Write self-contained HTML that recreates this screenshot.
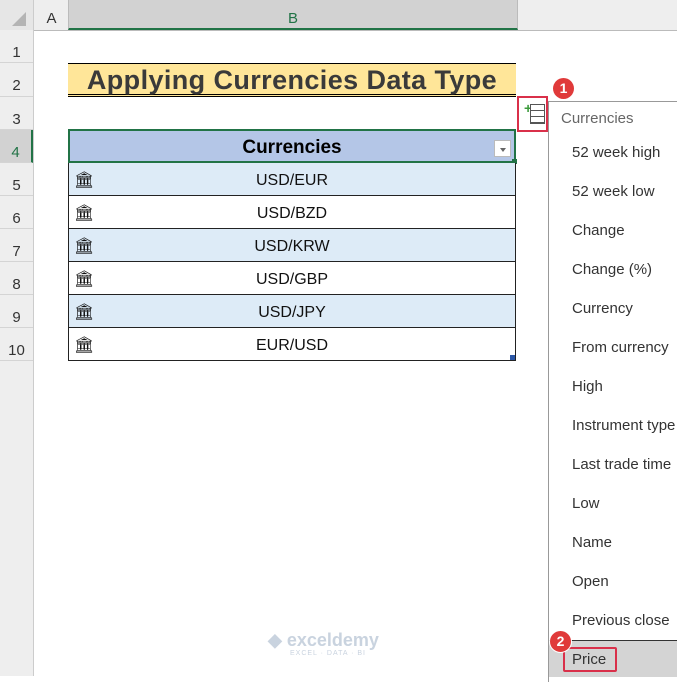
<!DOCTYPE html><html><head><style>
body{margin:0;width:677px;height:676px;overflow:hidden;background:#fff;font-family:"Liberation Sans",sans-serif;position:relative}
.a{position:absolute}
.rh{position:absolute;left:0;width:33px;text-align:center;font-size:15px;color:#333;border-bottom:1px solid #d4d4d4;background:#eeeeee;box-sizing:border-box}
.cell{position:absolute;left:68px;width:448px;height:33px;border-bottom:1px solid #222;box-sizing:border-box;font-size:16px;text-align:center;line-height:35px;color:#111}
.cell span{position:absolute;left:5px;top:0;font-size:16px}
.mi{position:absolute;left:572px;font-size:15px;color:#333}
</style></head><body>
<div class="a" style="left:0;top:0;width:677px;height:30px;background:#eeeeee;border-bottom:1px solid #bbb"></div>
<div class="a" style="left:0;top:0;width:33px;height:30px;background:#e6e6e6"></div>
<div class="a" style="left:12px;top:12px;width:0;height:0;border-left:14px solid transparent;border-bottom:14px solid #b4b4b4"></div>
<div class="a" style="left:33px;top:0;width:35px;height:30px;border-left:1px solid #ccc;text-align:center;line-height:38px;font-size:15px;color:#333">A</div>
<div class="a" style="left:68px;top:0;width:448px;height:28px;background:#d2d2d2;border-bottom:2px solid #217346;border-left:1px solid #bbb;border-right:1px solid #bbb;text-align:center;line-height:38px;font-size:15px;color:#217346">B</div>
<div class="a" style="left:0;top:30px;width:33px;height:646px;background:#eeeeee;border-right:1px solid #ccc"></div>
<div class="rh" style="top:30px;height:33px;line-height:46px">1</div>
<div class="rh" style="top:63px;height:34px;line-height:46px">2</div>
<div class="rh" style="top:97px;height:33px;line-height:46px">3</div>
<div class="rh" style="top:130px;height:33px;line-height:46px;background:#d2d2d2;color:#217346;border-right:2px solid #217346">4</div>
<div class="rh" style="top:163px;height:33px;line-height:46px">5</div>
<div class="rh" style="top:196px;height:33px;line-height:46px">6</div>
<div class="rh" style="top:229px;height:33px;line-height:46px">7</div>
<div class="rh" style="top:262px;height:33px;line-height:46px">8</div>
<div class="rh" style="top:295px;height:33px;line-height:46px">9</div>
<div class="rh" style="top:328px;height:33px;line-height:46px">10</div>
<div class="a" style="left:68px;top:63px;width:448px;height:30px;background:#ffe699;border-top:1px solid #000;border-bottom:3px double #000;text-align:center;font-weight:bold;font-size:27px;line-height:33px;color:#3a3a3a;letter-spacing:0.4px">Applying Currencies Data Type</div>
<div class="a" style="left:68px;top:129px;width:444px;height:30px;background:#b4c6e7;border:2px solid #217346;text-align:center;font-weight:bold;font-size:19px;line-height:33px;color:#000">Currencies</div>
<div class="a" style="left:494px;top:140px;width:17px;height:17px;background:#fff;border:1px solid #bbb;box-sizing:border-box"></div>
<div class="a" style="left:500px;top:148px;width:0;height:0;border-left:3px solid transparent;border-right:3px solid transparent;border-top:4px solid #666"></div>
<div class="a" style="left:512px;top:159px;width:5px;height:5px;background:#217346"></div>
<div class="cell" style="top:163px;background:#ddebf7;border-left:1px solid #222;border-right:1px solid #222"><span>🏛</span>USD/EUR</div>
<div class="cell" style="top:196px;border-left:1px solid #222;border-right:1px solid #222"><span>🏛</span>USD/BZD</div>
<div class="cell" style="top:229px;background:#ddebf7;border-left:1px solid #222;border-right:1px solid #222"><span>🏛</span>USD/KRW</div>
<div class="cell" style="top:262px;border-left:1px solid #222;border-right:1px solid #222"><span>🏛</span>USD/GBP</div>
<div class="cell" style="top:295px;background:#ddebf7;border-left:1px solid #222;border-right:1px solid #222"><span>🏛</span>USD/JPY</div>
<div class="cell" style="top:328px;border-left:1px solid #222;border-right:1px solid #222"><span>🏛</span>EUR/USD</div>
<div class="a" style="left:510px;top:355px;width:5px;height:5px;background:#2b57a6"></div>
<div class="a" style="left:548px;top:101px;width:140px;height:580px;background:#fff;border-left:1px solid #999;border-top:1px solid #999"></div>
<div class="a" style="left:517px;top:96px;width:27px;height:32px;border:2px solid #d9304a;background:#fff"></div>
<div class="a" style="left:524px;top:100px;color:#3a9a3a;font-size:14px;font-weight:bold">+</div>
<div class="a" style="left:530px;top:104px;width:13px;height:18px;border:1px solid #555;background:repeating-linear-gradient(#fff 0 5px,#555 5px 6px)"></div>
<div class="a" style="left:553px;top:78px;width:21px;height:21px;border-radius:50%;background:#e03a3a;color:#fff;font-weight:bold;font-size:14px;text-align:center;line-height:21px">1</div>
<div class="mi" style="left:561px;top:110px;color:#666">Currencies</div>
<div class="mi" style="top:144px">52 week high</div>
<div class="mi" style="top:183px">52 week low</div>
<div class="mi" style="top:222px">Change</div>
<div class="mi" style="top:261px">Change (%)</div>
<div class="mi" style="top:300px">Currency</div>
<div class="mi" style="top:339px">From currency</div>
<div class="mi" style="top:378px">High</div>
<div class="mi" style="top:417px">Instrument type</div>
<div class="mi" style="top:456px">Last trade time</div>
<div class="mi" style="top:495px">Low</div>
<div class="mi" style="top:534px">Name</div>
<div class="mi" style="top:573px">Open</div>
<div class="mi" style="top:612px">Previous close</div>
<div class="a" style="left:549px;top:640px;width:128px;height:36px;background:#d4d4d4;border-top:1px solid #333"></div>
<div class="a" style="left:563px;top:647px;width:50px;height:21px;border:2px solid #d9304a;border-radius:2px"></div>
<div class="mi" style="top:651px;left:572px">Price</div>
<div class="a" style="left:549px;top:630px;width:21px;height:21px;border-radius:50%;background:#e03a3a;color:#fff;font-weight:bold;font-size:14px;text-align:center;line-height:21px;border:1px solid #fff">2</div>
<div class="a" style="left:268px;top:630px;color:#c9d3df;font-size:18px;font-weight:bold">◆ exceldemy</div>
<div class="a" style="left:290px;top:650px;color:#c9d3df;font-size:7px;letter-spacing:1px">EXCEL · DATA · BI</div>
</body></html>
